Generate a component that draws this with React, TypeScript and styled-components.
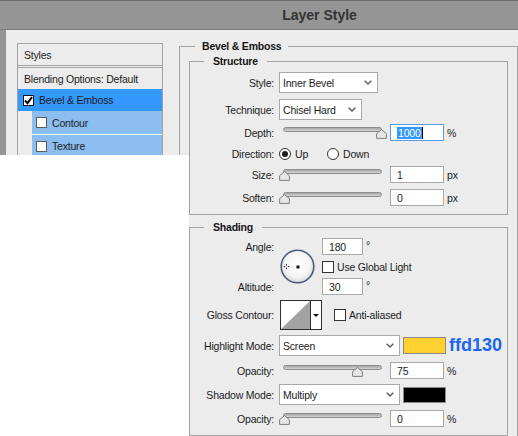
import { createGlobalStyle, styled } from 'styled-components';

const GlobalStyle = createGlobalStyle`
  html,
  body {
    margin: 0;
    padding: 0;
    background: #ffffff;
  }

  body {
    font-family: 'Liberation Sans', Arial, sans-serif;
    font-size: 10.5px;
    letter-spacing: -0.2px;
    color: #1c1c1c;
  }
`;

const Window = styled.div`
  position: relative;
  width: 518px;
  height: 436px;
  overflow: hidden;
  background: #959595;
  display: flex;
  flex-direction: column;
`;

const TitleBar = styled.div`
  box-sizing: border-box;
  flex: none;
  height: 30px;
  border-top: 1px solid #6e6e6e;
  border-bottom: 1px solid #7c7c7c;
  display: flex;
  align-items: center;
  justify-content: center;
  padding-left: 121px;
  font-size: 14px;
  font-weight: bold;
  letter-spacing: 0;
  color: #333333;
`;

const Body = styled.div`
  flex: 1;
  margin-left: 6px;
  padding-left: 11px;
  background: #ececec;
  display: flex;
  align-items: flex-start;
`;

// left column
const StylesList = styled.div`
  flex: none;
  width: 144px;
  margin-top: 13px;
  border: 1px solid #a3a3a3;
`;

const ListItem = styled.div<{ $active?: boolean; $sub?: boolean; $h: number }>`
  height: ${(p) => p.$h}px;
  display: flex;
  align-items: center;
  gap: 5px;
  white-space: nowrap;
  padding-left: ${(p) => (p.$active ? 5 : p.$sub ? 4 : 6)}px;
  margin-left: ${(p) => (p.$sub ? 14 : 0)}px;
  background: ${(p) => (p.$active ? '#3399ff' : p.$sub ? '#8bbdf0' : 'transparent')};
  border-bottom: ${(p) => (p.$sub ? '1px solid #ffffff' : 'none')};

  &.header {
    border-bottom: 3px double #a3a3a3;
  }
`;

const CheckBox = styled.span<{ $size: number; $border: string }>`
  box-sizing: border-box;
  flex: none;
  width: ${(p) => p.$size}px;
  height: ${(p) => p.$size}px;
  border: 1px solid ${(p) => p.$border};
  background: #ffffff;
  display: inline-flex;
  align-items: center;
  justify-content: center;
`;

// right column
const Settings = styled.div`
  flex: none;
  width: 339px;
  margin-left: 16px;
  margin-top: 10px;
`;

const Group = styled.fieldset<{ $mt?: number }>`
  box-sizing: border-box;
  min-width: 0;
  margin: ${(p) => p.$mt ?? 0}px 0 0;
  padding: 0;
  border: 1px solid #a3a3a3;
`;

const Legend = styled.legend<{ $ml: number; $pad: number }>`
  margin-left: ${(p) => p.$ml}px;
  padding: 0 ${(p) => p.$pad}px;
  line-height: 13px;
  font-weight: bold;
  color: #161616;
`;

const GroupBody = styled.div<{ $pt: number; $pb: number; $px?: number }>`
  padding: ${(p) => p.$pt}px ${(p) => p.$px ?? 0}px ${(p) => p.$pb}px;
`;

const Row = styled.div<{ $h: number; $mt?: number }>`
  display: flex;
  align-items: center;
  height: ${(p) => p.$h}px;
  margin-top: ${(p) => p.$mt ?? 0}px;
`;

const Label = styled.span`
  flex: none;
  width: 84px;
  margin-right: 5px;
  text-align: right;
  white-space: nowrap;
`;

const SelectBox = styled.div<{ $w: number }>`
  box-sizing: border-box;
  flex: none;
  width: ${(p) => p.$w}px;
  height: 21px;
  padding: 0 5px 0 3px;
  border: 1px solid #a9a9a9;
  background: #ffffff;
  display: flex;
  align-items: center;
  justify-content: space-between;
`;

const Field = styled.div<{ $w: number; $focused?: boolean }>`
  box-sizing: border-box;
  flex: none;
  width: ${(p) => p.$w}px;
  height: 17px;
  padding-left: 6px;
  border: 1px solid ${(p) => (p.$focused ? '#5b9bdf' : '#a9a9a9')};
  background: #ffffff;
  display: flex;
  align-items: center;
`;

const Selected = styled.span`
  background: #3399ff;
  color: #ffffff;
  line-height: 12px;
  padding: 0 1px;
  border-right: 1px solid #000000;
`;

const Unit = styled.span<{ $raised?: boolean }>`
  margin-left: 3px;
  align-self: ${(p) => (p.$raised ? 'flex-start' : 'auto')};
  margin-top: ${(p) => (p.$raised ? 1 : 0)}px;
`;

const SliderWrap = styled.div`
  position: relative;
  flex: none;
  width: 108px;
  height: 17px;
  margin-right: 3px;
`;

const Track = styled.div`
  position: absolute;
  left: 4px;
  top: 3px;
  box-sizing: border-box;
  width: 99px;
  height: 5px;
  border: 1px solid #8d8d8d;
  border-radius: 3px;
  background: linear-gradient(#a6a6a6, #d4d4d4);
`;

const Thumb = styled.svg`
  position: absolute;
  top: 5px;
`;

const RadioOption = styled.span<{ $mr?: number }>`
  display: inline-flex;
  align-items: center;
  gap: 4px;
  margin-right: ${(p) => p.$mr ?? 0}px;
`;

const RadioDot = styled.span<{ $checked?: boolean }>`
  box-sizing: border-box;
  width: 12px;
  height: 12px;
  border-radius: 50%;
  border: 1px solid #333333;
  background: #ffffff;
  display: inline-flex;
  align-items: center;
  justify-content: center;

  &::after {
    content: '';
    width: 6px;
    height: 6px;
    border-radius: 50%;
    background: ${(p) => (p.$checked ? '#1e1e1e' : 'transparent')};
  }
`;

const AngleBlock = styled.div`
  display: grid;
  grid-template-columns: 89px 43px auto;
  grid-template-rows: 17px 17px 17px;
  row-gap: 3px;
  align-items: center;
`;

const Dial = styled.svg`
  grid-column: 2;
  grid-row: 1 / span 3;
  margin-left: 1px;
`;

const Inline = styled.div<{ $ml?: number; $gap?: number }>`
  display: flex;
  align-items: center;
  gap: ${(p) => p.$gap ?? 3}px;
  margin-left: ${(p) => p.$ml ?? 0}px;
  white-space: nowrap;
`;

const ContourPicker = styled.div`
  box-sizing: border-box;
  flex: none;
  width: 42px;
  height: 30px;
  margin-left: 1px;
  border: 1px solid #2e2e2e;
  display: flex;
`;

const ContourPreview = styled.svg`
  border-right: 1px solid #2e2e2e;
  background: #ffffff;
`;

const ContourArrow = styled.div`
  flex: 1;
  background: #ffffff;
  display: flex;
  align-items: center;
  justify-content: center;

  &::after {
    content: '';
    border-left: 3px solid transparent;
    border-right: 3px solid transparent;
    border-top: 3px solid #111111;
  }
`;

const Swatch = styled.div<{ $color: string; $h: number }>`
  box-sizing: border-box;
  flex: none;
  width: 43px;
  height: ${(p) => p.$h}px;
  margin-left: 3px;
  border: 1px solid #8a8a8a;
  background: ${(p) => p.$color};
`;

const HexNote = styled.span`
  margin-left: 3px;
  font-size: 18px;
  font-weight: bold;
  letter-spacing: 0;
  color: #1a66f2;
`;

const Mask = styled.div`
  position: absolute;
  left: 0;
  top: 155px;
  width: 189px;
  bottom: 0;
  background: #ffffff;
`;

const Chevron = () => (
  <svg width="8" height="5" viewBox="0 0 8 5">
    <polyline points="0.7,0.7 4,4 7.3,0.7" fill="none" stroke="#5a5a5a" strokeWidth="1.4" />
  </svg>
);

const Tick = () => (
  <svg width="9" height="9" viewBox="0 0 9 9">
    <polyline points="1,4.5 3.5,7.2 8,1.2" fill="none" stroke="#000" strokeWidth="2" />
  </svg>
);

const Select = ({ width, value }: { width: number; value: string }) => (
  <SelectBox $w={width}>
    <span>{value}</span>
    <Chevron />
  </SelectBox>
);

const Slider = ({ fraction }: { fraction: number }) => (
  <SliderWrap>
    <Track />
    <Thumb width="11" height="10" viewBox="0 0 11 10" style={{ left: fraction * 97 }}>
      <polygon
        points="5.5,0.6 10.4,4.6 10.4,9.4 0.6,9.4 0.6,4.6"
        fill="#e6e6e6"
        stroke="#7f7f7f"
        strokeWidth="1"
      />
    </Thumb>
  </SliderWrap>
);

const SliderRow = ({
  label,
  fraction,
  value,
  unit,
  mt,
  focused,
}: {
  label: string;
  fraction: number;
  value: string;
  unit: string;
  mt?: number;
  focused?: boolean;
}) => (
  <Row $h={17} $mt={mt}>
    <Label>{label}</Label>
    <Slider fraction={fraction} />
    <Field $w={54} $focused={focused}>
      {focused ? <Selected>{value}</Selected> : value}
    </Field>
    <Unit>{unit}</Unit>
  </Row>
);

const App = () => {
  return (
    <>
      <GlobalStyle />
      <Window>
        <TitleBar>Layer Style</TitleBar>
        <Body>
          <StylesList>
            <ListItem className="header" $h={21}>
              Styles
            </ListItem>
            <ListItem $h={21}>Blending Options: Default</ListItem>
            <ListItem $active $h={22}>
              <CheckBox $size={11} $border="#1a1a1a">
                <Tick />
              </CheckBox>
              Bevel &amp; Emboss
            </ListItem>
            <ListItem $sub $h={23}>
              <CheckBox $size={11} $border="#5c5c5c" />
              Contour
            </ListItem>
            <ListItem $sub $h={22}>
              <CheckBox $size={11} $border="#5c5c5c" />
              Texture
            </ListItem>
          </StylesList>

          <Settings>
            <Group>
              <Legend $ml={15} $pad={7}>
                Bevel &amp; Emboss
              </Legend>
              <GroupBody $pt={2} $pb={20} $px={9}>
                <Group>
                  <Legend $ml={14} $pad={9}>
                    Structure
                  </Legend>
                  <GroupBody $pt={4} $pb={8}>
                    <Row $h={21}>
                      <Label>Style:</Label>
                      <Select width={99} value="Inner Bevel" />
                    </Row>
                    <Row $h={21} $mt={6}>
                      <Label>Technique:</Label>
                      <Select width={83} value="Chisel Hard" />
                    </Row>
                    <SliderRow label="Depth:" fraction={1} value="1000" unit="%" mt={4} focused />
                    <Row $h={14} $mt={6}>
                      <Label>Direction:</Label>
                      <RadioOption $mr={19}>
                        <RadioDot $checked />
                        Up
                      </RadioOption>
                      <RadioOption>
                        <RadioDot />
                        Down
                      </RadioOption>
                    </Row>
                    <SliderRow label="Size:" fraction={0} value="1" unit="px" mt={5} />
                    <SliderRow label="Soften:" fraction={0} value="0" unit="px" mt={6} />
                  </GroupBody>
                </Group>

                <Group $mt={6}>
                  <Legend $ml={14} $pad={9}>
                    Shading
                  </Legend>
                  <GroupBody $pt={4} $pb={8}>
                    <AngleBlock>
                      <Label>Angle:</Label>
                      <Dial width="36" height="36" viewBox="0 0 36 36">
                        <defs>
                          <radialGradient id="dialFill" cx="50%" cy="45%" r="55%">
                            <stop offset="0%" stopColor="#ffffff" />
                            <stop offset="70%" stopColor="#f4f4f4" />
                            <stop offset="100%" stopColor="#d6d6d6" />
                          </radialGradient>
                        </defs>
                        <circle cx="17.5" cy="17.5" r="16.3" fill="url(#dialFill)" stroke="#4a5b7c" strokeWidth="1.6" />
                        <rect x="6" y="15" width="1" height="1.6" fill="#333" />
                        <rect x="6" y="18.6" width="1" height="1.6" fill="#333" />
                        <rect x="3.6" y="17" width="1.6" height="1" fill="#333" />
                        <rect x="7.8" y="17" width="1.6" height="1" fill="#333" />
                        <rect x="16.5" y="16.5" width="3" height="3" fill="#111" />
                      </Dial>
                      <Inline $gap={0}>
                        <Field $w={41}>180</Field>
                        <Unit $raised>°</Unit>
                      </Inline>
                      <Inline style={{ gridColumn: 3, gridRow: 2 }}>
                        <CheckBox $size={12} $border="#333333" />
                        Use Global Light
                      </Inline>
                      <Label style={{ gridColumn: 1, gridRow: 3 }}>Altitude:</Label>
                      <Inline $gap={0} style={{ gridColumn: 3, gridRow: 3 }}>
                        <Field $w={41}>30</Field>
                        <Unit $raised>°</Unit>
                      </Inline>
                    </AngleBlock>

                    <Row $h={30} $mt={5}>
                      <Label>Gloss Contour:</Label>
                      <ContourPicker>
                        <ContourPreview width="29" height="28" viewBox="0 0 29 28">
                          <polygon points="0,28 29,0 29,28" fill="#a3a3a3" />
                        </ContourPreview>
                        <ContourArrow />
                      </ContourPicker>
                      <Inline $ml={12}>
                        <CheckBox $size={12} $border="#333333" />
                        Anti-aliased
                      </Inline>
                    </Row>

                    <Row $h={21} $mt={5}>
                      <Label>Highlight Mode:</Label>
                      <Select width={121} value="Screen" />
                      <Swatch $color="#ffd130" $h={17} />
                      <HexNote>ffd130</HexNote>
                    </Row>
                    <SliderRow label="Opacity:" fraction={0.75} value="75" unit="%" mt={6} />
                    <Row $h={21} $mt={5}>
                      <Label>Shadow Mode:</Label>
                      <Select width={121} value="Multiply" />
                      <Swatch $color="#000000" $h={16} />
                    </Row>
                    <SliderRow label="Opacity:" fraction={0} value="0" unit="%" mt={5} />
                  </GroupBody>
                </Group>
              </GroupBody>
            </Group>
          </Settings>
        </Body>
        <Mask />
      </Window>
    </>
  );
};

export default App;
